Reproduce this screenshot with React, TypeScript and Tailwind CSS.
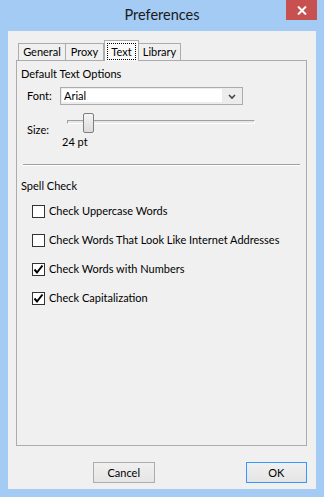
import React from "react";

function Checkbox({ checked }: { checked: boolean }) {
  return (
    <div className="w-[13px] h-[13px] border border-[#333333] bg-white flex items-center justify-center shrink-0">
      {checked && (
        <svg width="11" height="11" viewBox="0 0 11 11">
          <path d="M1.5 5.5 L4 8.5 L9.5 1.5" fill="none" stroke="#000" strokeWidth="2" />
        </svg>
      )}
    </div>
  );
}

function CheckRow({ label, checked }: { label: string; checked: boolean }) {
  return (
    <div className="flex items-center h-[16px] pl-[15px] gap-[4px]">
      <Checkbox checked={checked} />
      <span className="leading-[16px] whitespace-nowrap">{label}</span>
    </div>
  );
}

export default function App() {
  const font = { fontFamily: '"Segoe UI", Lato, "Liberation Sans", Arial, sans-serif' };
  return (
    <div
      className="w-[324px] h-[497px] bg-[#a3cbf4] flex flex-col text-[11px] text-black overflow-hidden"
      style={font}
    >
      <div className="h-[31px] relative flex items-center justify-center">
        <span className="text-[14.5px] text-[#1a1a1a] leading-[20px] -mt-[1px]">Preferences</span>
        <div className="absolute right-[7px] top-0 w-[31px] h-[20px] bg-[#c75050] flex items-center justify-center">
          <svg width="10" height="9" viewBox="0 0 10 9">
            <path d="M1 0.5 L9 8.5 M9 0.5 L1 8.5" stroke="#fff" strokeWidth="2" />
          </svg>
        </div>
      </div>
      <div className="mx-[8px] mb-[8px] flex-1 bg-[#f0f0f0] flex flex-col pl-[8px] pr-[9px] pt-[9px]">
        {/* Tabs */}
        <div className="h-[20px] flex items-end pl-[2px] relative z-10">
          <div className="w-[48px] h-[17px] border border-b-0 border-[#acacac] bg-[#f0f0f0] flex items-center justify-center leading-[16px]">
            General
          </div>
          <div className="w-[38px] h-[17px] border border-b-0 border-l-0 border-[#acacac] bg-[#f0f0f0] flex items-center justify-center leading-[16px]">
            Proxy
          </div>
          <div className="w-[35px] h-[21px] -mb-[1px] border border-b-0 border-[#acacac] bg-[#fafafa] flex items-start justify-center pt-[2px]">
            <span className="border border-dotted border-black px-[3px] leading-[15px] h-[17px]">Text</span>
          </div>
          <div className="w-[42px] h-[17px] border border-b-0 border-l-0 border-[#acacac] bg-[#f0f0f0] flex items-center justify-center leading-[16px]">
            Library
          </div>
        </div>
        {/* Panel */}
        <div className="h-[386px] border border-[#acacac] flex flex-col">
          <div className="mt-[5px] pl-[4px] leading-[16px]">Default Text Options</div>
          <div className="mt-[5px] flex items-center pl-[10px]">
            <span className="w-[33px] leading-[16px]">Font:</span>
            <div className="w-[183px] h-[18px] border border-[#acacac] bg-[#ececec] flex pl-[1px] pt-[1px] pb-[2px]">
              <div className="flex-1 bg-white flex items-center pl-[2px] leading-[14px]">Arial</div>
              <div className="w-[20px] flex items-center justify-center pt-[2px]">
                <svg width="8" height="6" viewBox="0 0 8 6">
                  <path d="M1 1 L4 4 L7 1" fill="none" stroke="#444" strokeWidth="1.6" />
                </svg>
              </div>
            </div>
          </div>
          <div className="mt-[8px] flex pl-[10px]">
            <span className="w-[35px] pt-[9px] leading-[16px]">Size:</span>
            <div className="flex flex-col">
              <div className="relative w-[195px] h-[20px]">
                <div className="absolute left-[5px] top-[7px] w-[188px] h-[4px] border border-t-[#a0a0a0] border-l-[#a0a0a0] border-b-white border-r-white bg-[#e6e6e6]" />
                <div className="absolute left-[21px] top-0 w-[11px] h-[20px] rounded-[2px] border border-[#7f7f7f] bg-gradient-to-b from-[#f4f4f4] to-[#dcdcdc]" />
              </div>
              <span className="mt-[1px] leading-[16px]">24 pt</span>
            </div>
          </div>
          <div className="mt-[14px] mx-[6px] h-[2px] border-t border-t-[#a0a0a0] border-b border-b-white" />
          <div className="mt-[12px] pl-[4px] leading-[16px]">Spell Check</div>
          <div className="mt-[9px] flex flex-col gap-[13px]">
            <CheckRow label="Check Uppercase Words" checked={false} />
            <CheckRow label="Check Words That Look Like Internet Addresses" checked={false} />
            <CheckRow label="Check Words with Numbers" checked={true} />
            <CheckRow label="Check Capitalization" checked={true} />
          </div>
        </div>
        {/* Buttons */}
        <div className="mt-[16px] flex">
          <div className="ml-[77px] w-[63px] h-[21px] border border-[#acacac] bg-gradient-to-b from-[#f0f0f0] to-[#e5e5e5] flex items-center justify-center leading-[16px]">
            Cancel
          </div>
          <div className="ml-[91px] w-[63px] h-[21px] border border-[#3399ff] bg-gradient-to-b from-[#f0f0f0] to-[#e5e5e5] flex items-center justify-center leading-[16px]">
            OK
          </div>
        </div>
      </div>
    </div>
  );
}
